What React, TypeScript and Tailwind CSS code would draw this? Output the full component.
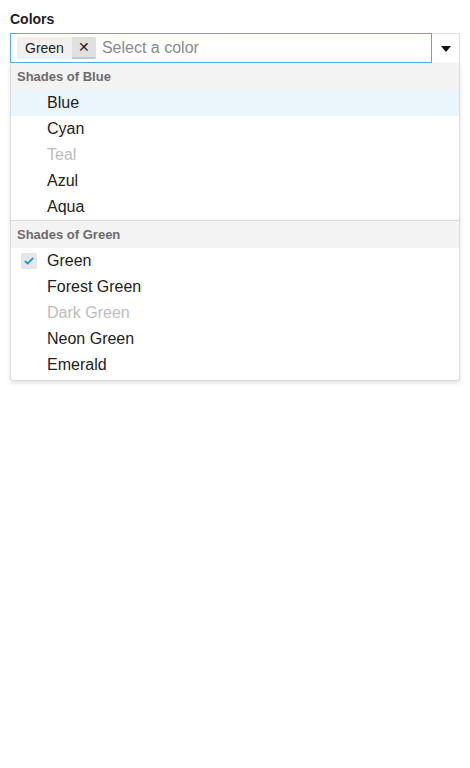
import React from 'react';

type Opt = { label: string; disabled?: boolean; selected?: boolean; active?: boolean };

const groups: { title: string; options: Opt[] }[] = [
  {
    title: 'Shades of Blue',
    options: [
      { label: 'Blue', active: true },
      { label: 'Cyan' },
      { label: 'Teal', disabled: true },
      { label: 'Azul' },
      { label: 'Aqua' },
    ],
  },
  {
    title: 'Shades of Green',
    options: [
      { label: 'Green', selected: true },
      { label: 'Forest Green' },
      { label: 'Dark Green', disabled: true },
      { label: 'Neon Green' },
      { label: 'Emerald' },
    ],
  },
];

const Check = () => (
  <svg viewBox="0 0 16 16" className="w-[12px] h-[12px]" fill="none" stroke="#1a8ee0" strokeWidth="2.2" strokeLinecap="round" strokeLinejoin="round">
    <path d="M3 8.5l3.2 3L13 4.5" />
  </svg>
);

export default function App() {
  return (
    <div className="min-h-screen bg-white px-[10px] pt-[10px]" style={{ fontFamily: '"Liberation Sans", Arial, sans-serif' }}>
      <label className="block text-[14px] font-bold text-[#222] leading-[18px] mb-[5px]">Colors</label>

      <div className="flex h-[30px]">
        {/* input */}
        <div className="flex-1 flex items-center border border-[#4eaee6] pl-[6px] gap-[6px]">
          <div className="flex h-[22px] items-stretch rounded-[2px] overflow-hidden bg-[#f0f0f0] text-[14px] text-[#222]">
            <span className="px-[8px] flex items-center">Green</span>
            <button className="w-[24px] flex items-center justify-center bg-[#e0e0e0] border-b-2 border-[#c8c8c8] text-[14px] text-[#222]">✕</button>
          </div>
          <span className="text-[16px] text-[#8a8a8a]">Select a color</span>
        </div>
        {/* arrow */}
        <div className="w-[28px] flex items-center justify-center border-t border-r border-[#e2e2e2]">
          <svg viewBox="0 0 10 6" className="w-[10px] h-[6px]">
            <path d="M0 0h10L5 6z" fill="#111" />
          </svg>
        </div>
      </div>

      {/* dropdown */}
      <div className="border border-t-0 border-[#dcdcdc] rounded-b-[3px] shadow-[0_2px_4px_rgba(0,0,0,0.12)] overflow-hidden pb-[2px]">
        {groups.map((g, gi) => (
          <div key={g.title} className={gi > 0 ? 'border-t border-[#dcdcdc]' : ''}>
            <div className="h-[27px] flex items-center px-[6px] bg-[#f3f3f3] text-[13px] font-bold text-[#6b6b6b]">{g.title}</div>
            {g.options.map((o) => (
              <div
                key={o.label}
                className={`h-[26px] flex items-center text-[16px] ${o.active ? 'bg-[#ebf5fc]' : ''} ${o.disabled ? 'text-[#bdbdbd]' : 'text-[#222]'}`}
              >
                <div className="w-[36px] flex justify-end pr-[10px]">
                  {o.selected && (
                    <span className="w-[16px] h-[16px] rounded-[2px] bg-[#e4e7ea] flex items-center justify-center">
                      <Check />
                    </span>
                  )}
                </div>
                <span>{o.label}</span>
              </div>
            ))}
          </div>
        ))}
      </div>
    </div>
  );
}
